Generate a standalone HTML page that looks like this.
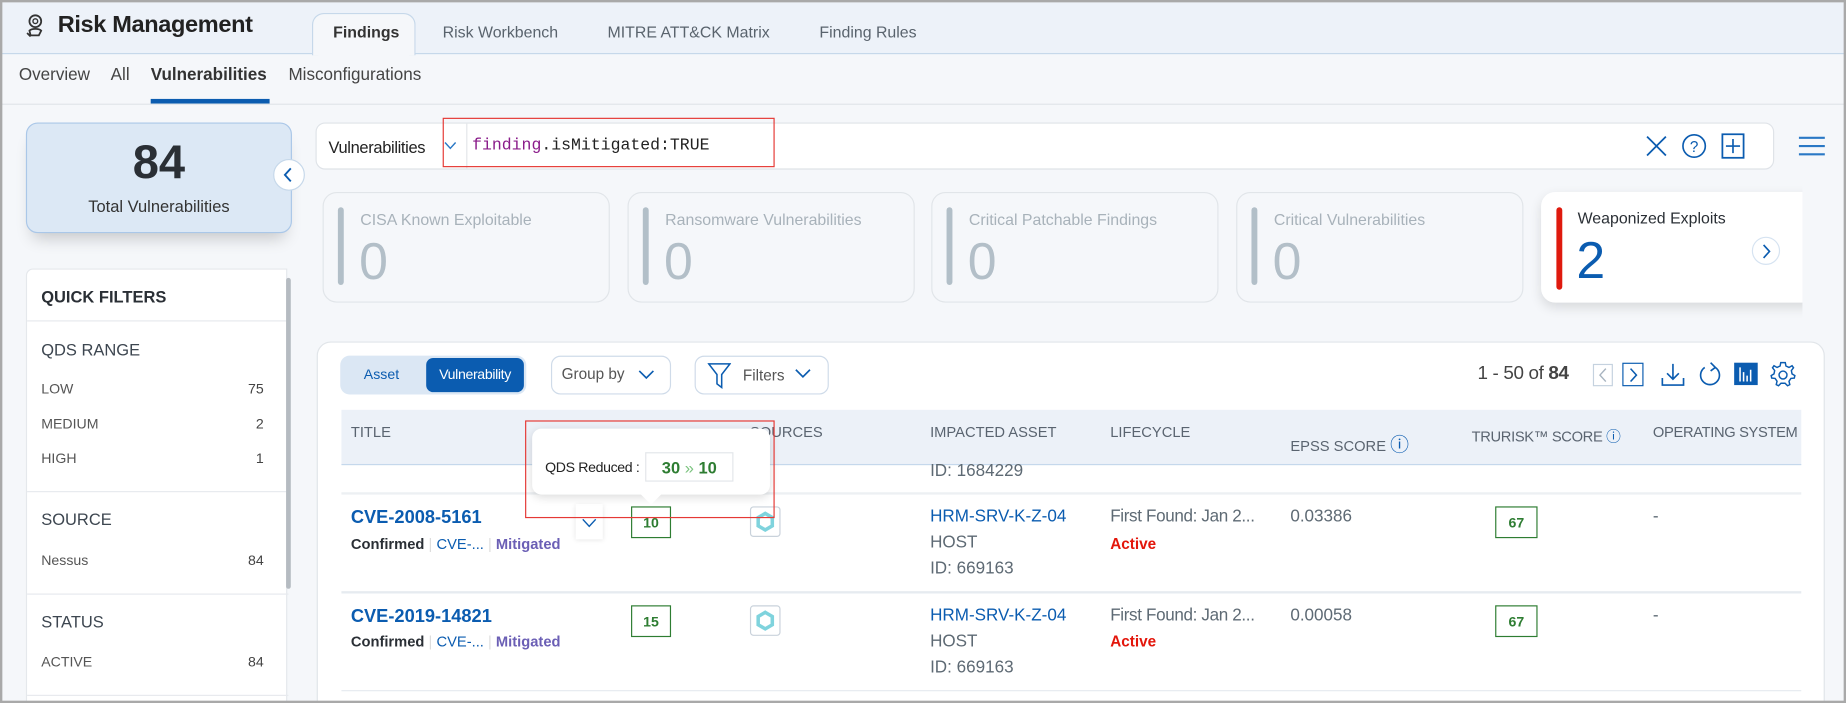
<!DOCTYPE html>
<html><head><meta charset="utf-8"><style>
*{box-sizing:border-box;margin:0;padding:0}
html,body{width:1846px;height:703px;overflow:hidden;background:#f5f7fa}
#w{position:absolute;left:0;top:0;width:1568px;height:597px;transform:scale(1.17730,1.17760);transform-origin:0 0;font-family:"Liberation Sans",sans-serif;color:#333;background:#f5f7fa;overflow:hidden}
.a{position:absolute;white-space:nowrap}
.hdr{left:0;top:0;width:1568px;height:46px;background:#edf2f9;border-bottom:1px solid #c6d8ea}
.tab{top:20px;font-size:13.5px;color:#59636d}
.sub{top:56px;font-size:14.5px;color:#444}
.card{background:#f5f7fa;border:1px solid #e1e5e9;border-radius:12px;top:163px;height:94px;width:244px}
.bar{left:12px;top:12px;width:5px;height:66px;border-radius:3px;background:#b2bfc8}
.ct{left:31px;top:15px;font-size:13.5px;color:#a8b2ba}
.cv{left:30px;top:34px;font-size:44px;color:#b3bfc8}
.qf{font-size:12px;color:#555}
.qv{font-size:12px;color:#444;right:19px}
.qh{font-size:14px;color:#3d4650}
.hl{height:1px;background:#e7eaee;left:0;width:222px}
.th{font-size:12.5px;color:#5a6470;top:360px}
.box{border:1px solid #2e7d32;color:#2e7d32;font-size:12px;font-weight:bold;text-align:center;line-height:26px;height:27px}
.cve{font-size:15.5px;font-weight:bold;color:#0b5cb0}
.g{color:#5e6a74;font-size:14.5px}
.blue{color:#0b5cb0;font-size:14.5px}
.red{color:#e3160b;font-weight:bold;font-size:13px}
.tag{font-size:12.5px}
</style></head><body><div id="w">
<div class="a hdr"></div>
<svg class="a" style="left:21px;top:11px" width="18" height="22" viewBox="0 0 18 22"><circle cx="9" cy="7" r="5" fill="none" stroke="#333" stroke-width="1.5"/><circle cx="9" cy="7" r="2" fill="none" stroke="#333" stroke-width="1.2"/><path d="M4 15 C6 13 12 13 14 15 L12 19 H5 Z M2 17 L5 20" fill="none" stroke="#333" stroke-width="1.5"/></svg>
<div class="a" style="left:49px;top:10px;font-size:20px;font-weight:bold;color:#222;letter-spacing:-0.3px">Risk Management</div>
<div class="a" style="left:265px;top:11px;width:88px;height:36px;background:#f5f7fa;border:1px solid #c6d8ea;border-bottom:none;border-radius:10px 10px 0 0"></div>
<div class="a tab" style="left:283px;font-weight:bold;color:#333">Findings</div>
<div class="a tab" style="left:376px">Risk Workbench</div>
<div class="a tab" style="left:516px">MITRE ATT&amp;CK Matrix</div>
<div class="a tab" style="left:696px">Finding Rules</div>
<div class="a sub" style="left:16px">Overview</div>
<div class="a sub" style="left:94px">All</div>
<div class="a sub" style="left:128px;font-weight:bold;color:#333">Vulnerabilities</div>
<div class="a sub" style="left:245px">Misconfigurations</div>
<div class="a" style="left:128px;top:84px;width:101px;height:4px;background:#0b5cb0"></div>
<div class="a" style="left:0;top:88px;width:1568px;height:1px;background:#e0e4e8"></div>

<div class="a" style="left:22px;top:104px;width:226px;height:94px;background:#dce8f5;border:1px solid #aac7e8;border-radius:10px;box-shadow:0 10px 14px -6px rgba(0,0,0,.2)"></div>
<div class="a" style="left:22px;top:116px;width:226px;text-align:center;font-size:40px;font-weight:bold;color:#2a2f35">84</div>
<div class="a" style="left:22px;top:167px;width:226px;text-align:center;font-size:14px;color:#333">Total Vulnerabilities</div>
<div class="a" style="left:232px;top:135px;width:27px;height:27px;border-radius:50%;background:#fff;border:1px solid #c6d8ea"></div>
<svg class="a" style="left:240px;top:142px" width="10" height="13"><path d="M7 1 L2 6.5 L7 12" fill="none" stroke="#0b5cb0" stroke-width="1.6"/></svg>

<div class="a" style="left:22px;top:228px;width:222px;height:380px;background:#fff;border:1px solid #e5e8ec;border-radius:6px 0 0 0">
<div class="a qh" style="left:12px;top:15px;font-weight:bold;color:#2a2f35">QUICK FILTERS</div>
<div class="a hl" style="top:43px"></div>
<div class="a qh" style="left:12px;top:60px">QDS RANGE</div>
<div class="a qf" style="left:12px;top:94px">LOW</div><div class="a qv" style="top:94px">75</div>
<div class="a qf" style="left:12px;top:124px">MEDIUM</div><div class="a qv" style="top:124px">2</div>
<div class="a qf" style="left:12px;top:153px">HIGH</div><div class="a qv" style="top:153px">1</div>
<div class="a hl" style="top:188px"></div>
<div class="a qh" style="left:12px;top:204px">SOURCE</div>
<div class="a qf" style="left:12px;top:240px">Nessus</div><div class="a qv" style="top:240px">84</div>
<div class="a hl" style="top:275px"></div>
<div class="a qh" style="left:12px;top:291px">STATUS</div>
<div class="a qf" style="left:12px;top:326px">ACTIVE</div><div class="a qv" style="top:326px">84</div>
<div class="a hl" style="top:361px"></div>
</div>
<div class="a" style="left:243px;top:236px;width:4px;height:264px;background:#b5bbc1;border-radius:2px"></div>

<div class="a" style="left:268px;top:104px;width:1239px;height:40px;background:#fff;border:1px solid #dfe3e8;border-radius:8px"></div>
<div class="a" style="left:279px;top:117px;font-size:14px;color:#222;letter-spacing:-0.3px">Vulnerabilities</div>
<svg class="a" style="left:377px;top:120px" width="11" height="8"><path d="M1 1 L5.5 6 L10 1" fill="none" stroke="#2a78c5" stroke-width="1.2"/></svg>
<div class="a" style="left:396px;top:105px;width:1px;height:38px;background:#e3e6ea"></div>
<div class="a" style="left:401px;top:116px;font-family:'Liberation Mono',monospace;font-size:14px;color:#222"><span style="color:#8a1c8a">finding</span>.isMitigated:TRUE</div>
<div class="a" style="left:376px;top:100px;width:282px;height:42px;border:1.5px solid #e53935"></div>
<svg class="a" style="left:1397px;top:114px" width="20" height="20"><path d="M2 2 L18 18 M18 2 L2 18" stroke="#0b5cb0" stroke-width="1.5"/></svg>
<svg class="a" style="left:1428px;top:113px" width="22" height="22"><circle cx="11" cy="11" r="9.5" fill="none" stroke="#0b5cb0" stroke-width="1.4"/><text x="11" y="16" font-size="13" text-anchor="middle" fill="#0b5cb0" font-family="Liberation Sans">?</text></svg>
<svg class="a" style="left:1462px;top:113px" width="20" height="22"><rect x="1" y="1" width="18" height="20" fill="none" stroke="#0b5cb0" stroke-width="1.5"/><path d="M10 5 V17 M4 11 H16" stroke="#0b5cb0" stroke-width="1.4"/></svg>
<svg class="a" style="left:1527px;top:115px" width="24" height="18"><path d="M1 2 H23 M1 9 H23 M1 16 H23" stroke="#2a78c5" stroke-width="1.8"/></svg>

<div class="a card" style="left:274px"><div class="a bar"></div><div class="a ct">CISA Known Exploitable</div><div class="a cv">0</div></div>
<div class="a card" style="left:533px"><div class="a bar"></div><div class="a ct">Ransomware Vulnerabilities</div><div class="a cv">0</div></div>
<div class="a card" style="left:791px"><div class="a bar"></div><div class="a ct">Critical Patchable Findings</div><div class="a cv">0</div></div>
<div class="a card" style="left:1050px"><div class="a bar"></div><div class="a ct">Critical Vulnerabilities</div><div class="a cv">0</div></div>
<div class="a card" style="left:1309px;width:240px;background:#fff;border:none;border-radius:12px 0 0 12px;box-shadow:0 4px 10px rgba(0,0,0,.12);clip-path:inset(-20px 18px -20px -20px)"><div class="a bar" style="left:13px;top:13px;height:70px;background:#df1a0e"></div><div class="a ct" style="left:31px;top:15px;color:#2a2f35">Weaponized Exploits</div><div class="a cv" style="color:#0b5cb0;top:34px">2</div>
<div class="a" style="left:179px;top:38px;width:24px;height:24px;border-radius:50%;border:1px solid #d6e3f1"></div><svg class="a" style="left:187px;top:44px" width="9" height="13"><path d="M2 1 L7 6.5 L2 12" fill="none" stroke="#0b5cb0" stroke-width="1.4"/></svg></div>

<div class="a" style="left:269px;top:290px;width:1281px;height:320px;background:#fff;border:1px solid #e1e5e9;border-radius:12px"></div>
<div class="a" style="left:289px;top:302px;width:158px;height:33px;background:#dbe7f4;border-radius:8px"></div>
<div class="a" style="left:309px;top:311px;font-size:12px;color:#0b5cb0">Asset</div>
<div class="a" style="left:362px;top:304px;width:83px;height:29px;background:#0b5cb0;border-radius:6px;color:#fff;font-size:12px;text-align:center;line-height:28px;letter-spacing:-0.3px">Vulnerability</div>
<div class="a" style="left:468px;top:302px;width:102px;height:33px;border:1px solid #cfdbe9;border-radius:8px"></div>
<div class="a" style="left:477px;top:310px;font-size:13px;color:#555">Group by</div>
<svg class="a" style="left:542px;top:314px" width="14" height="9"><path d="M1 1 L7 7 L13 1" fill="none" stroke="#0b5cb0" stroke-width="1.4"/></svg>
<div class="a" style="left:590px;top:302px;width:114px;height:33px;border:1px solid #cfdbe9;border-radius:8px"></div>
<svg class="a" style="left:601px;top:307px" width="20" height="24"><path d="M1 2 H19 L12 11 V22 L8 19 V11 Z" fill="none" stroke="#0b5cb0" stroke-width="1.3"/></svg>
<div class="a" style="left:631px;top:311px;font-size:13px;color:#555">Filters</div>
<svg class="a" style="left:675px;top:313px" width="14" height="9"><path d="M1 1 L7 7 L13 1" fill="none" stroke="#0b5cb0" stroke-width="1.4"/></svg>

<div class="a" style="left:1255px;top:309px;font-size:16px;color:#444;letter-spacing:-0.3px">1 - 50 of <b>84</b></div>
<div class="a" style="left:1353px;top:309px;width:17px;height:19px;border:1px solid #c5d2df"></div><svg class="a" style="left:1357px;top:312px" width="9" height="13"><path d="M7 1 L2 6.5 L7 12" fill="none" stroke="#a8b4c0" stroke-width="1.2"/></svg>
<div class="a" style="left:1378px;top:308px;width:18px;height:20px;border:1px solid #0b5cb0"></div><svg class="a" style="left:1383px;top:312px" width="9" height="13"><path d="M2 1 L7 6.5 L2 12" fill="none" stroke="#0b5cb0" stroke-width="1.3"/></svg>
<svg class="a" style="left:1410px;top:307px" width="22" height="22"><path d="M11 2 V15 M6 10 L11 15 L16 10 M2 14 V20 H20 V14" fill="none" stroke="#0b5cb0" stroke-width="1.4"/></svg>
<svg class="a" style="left:1442px;top:306px" width="22" height="24"><path d="M15 6 A8 8 0 1 1 6 6 M11 2 L15 6 L11 9" fill="none" stroke="#0b5cb0" stroke-width="1.4"/></svg>
<div class="a" style="left:1473px;top:308px;width:20px;height:19px;background:#0b5cb0"></div>
<svg class="a" style="left:1475px;top:310px" width="16" height="15"><path d="M3 2 V14 M6 6 V14 M9 9 V14 M12 4 V14" stroke="#fff" stroke-width="1.3"/></svg>
<svg class="a" style="left:1503px;top:306px" width="23" height="23" viewBox="0 0 24 24"><path d="M12 2 L14 2 L14.6 5 L17.3 6.3 L20 4.8 L21.3 6.6 L19.4 9.1 L20 12 L22.5 13.5 L22 15.7 L19 16 L17.3 18.5 L18 21.5 L16 22.5 L13.8 20.3 L10.2 20.3 L8 22.5 L6 21.5 L6.7 18.5 L5 16 L2 15.7 L1.5 13.5 L4 12 L4.6 9.1 L2.7 6.6 L4 4.8 L6.7 6.3 L9.4 5 L10 2 Z" fill="none" stroke="#0b5cb0" stroke-width="1.3"/><circle cx="12" cy="13" r="3.5" fill="none" stroke="#0b5cb0" stroke-width="1.3"/></svg>

<div class="a" style="left:290px;top:348px;width:1240px;height:47px;background:#ecf1f8;border-bottom:1px solid #c5d8ec"></div>
<div class="a th" style="left:298px">TITLE</div>
<div class="a th" style="left:536px">QDS ⓘ</div>
<div class="a th" style="left:637px">SOURCES</div>
<div class="a th" style="left:790px">IMPACTED ASSET</div>
<div class="a th" style="left:943px">LIFECYCLE</div>
<div class="a th" style="left:1096px;top:364px">EPSS SCORE <span style="color:#0b5cb0;font-size:16px">ⓘ</span></div>
<div class="a th" style="left:1250px;letter-spacing:-0.3px">TRURISK™ SCORE <span style="color:#0b5cb0">ⓘ</span></div>
<div class="a th" style="left:1404px;letter-spacing:-0.3px">OPERATING SYSTEM</div>
<div class="a g" style="left:790px;top:392px">ID: 1684229</div>
<div class="a" style="left:290px;top:418px;width:1240px;height:2px;background:#edf0f3"></div>

<div class="a cve" style="left:298px;top:431px">CVE-2008-5161</div>
<div class="a tag" style="left:298px;top:455px"><b style="color:#2a2f35">Confirmed</b> <span style="color:#ddd">|</span> <span style="color:#0b5cb0">CVE-...</span> <span style="color:#ddd">|</span> <span style="color:#6b5fb5;font-weight:bold">Mitigated</span></div>
<div class="a" style="left:489px;top:428px;width:23px;height:30px;background:#fff;box-shadow:0 1px 4px rgba(0,0,0,.1)"></div>
<svg class="a" style="left:494px;top:440px" width="13" height="9"><path d="M1 1 L6.5 7 L12 1" fill="none" stroke="#0b5cb0" stroke-width="1.2"/></svg>
<div class="a box" style="left:536px;top:430px;width:34px">10</div>
<div class="a" style="left:637px;top:430px;width:26px;height:26px;border:1px solid #c9d2db;border-radius:3px"></div>
<svg class="a" style="left:641px;top:434px" width="18" height="18"><polygon points="9,2 15,5.5 15,12.5 9,16 3,12.5 3,5.5" fill="none" stroke="#7fd3dd" stroke-width="3"/></svg>
<div class="a blue" style="left:790px;top:431px">HRM-SRV-K-Z-04</div>
<div class="a g" style="left:790px;top:453px">HOST</div>
<div class="a g" style="left:790px;top:475px">ID: 669163</div>
<div class="a g" style="left:943px;top:431px;letter-spacing:-0.3px">First Found: Jan 2...</div>
<div class="a red" style="left:943px;top:454px">Active</div>
<div class="a g" style="left:1096px;top:431px">0.03386</div>
<div class="a box" style="left:1270px;top:430px;width:36px">67</div>
<div class="a g" style="left:1404px;top:431px">-</div>
<div class="a" style="left:290px;top:502px;width:1240px;height:2px;background:#e6ebf0"></div>

<div class="a cve" style="left:298px;top:515px">CVE-2019-14821</div>
<div class="a tag" style="left:298px;top:538px"><b style="color:#2a2f35">Confirmed</b> <span style="color:#ddd">|</span> <span style="color:#0b5cb0">CVE-...</span> <span style="color:#ddd">|</span> <span style="color:#6b5fb5;font-weight:bold">Mitigated</span></div>
<div class="a box" style="left:536px;top:514px;width:34px">15</div>
<div class="a" style="left:637px;top:514px;width:26px;height:26px;border:1px solid #c9d2db;border-radius:3px"></div>
<svg class="a" style="left:641px;top:518px" width="18" height="18"><polygon points="9,2 15,5.5 15,12.5 9,16 3,12.5 3,5.5" fill="none" stroke="#7fd3dd" stroke-width="3"/></svg>
<div class="a blue" style="left:790px;top:515px">HRM-SRV-K-Z-04</div>
<div class="a g" style="left:790px;top:537px">HOST</div>
<div class="a g" style="left:790px;top:559px">ID: 669163</div>
<div class="a g" style="left:943px;top:515px;letter-spacing:-0.3px">First Found: Jan 2...</div>
<div class="a red" style="left:943px;top:537px">Active</div>
<div class="a g" style="left:1096px;top:515px">0.00058</div>
<div class="a box" style="left:1270px;top:514px;width:36px">67</div>
<div class="a g" style="left:1404px;top:515px">-</div>
<div class="a" style="left:290px;top:586px;width:1240px;height:1px;background:#e6ebf0"></div>

<div class="a" style="left:452px;top:364px;width:202px;height:56px;background:#fff;border-radius:8px;box-shadow:0 2px 8px rgba(0,0,0,.15)"></div>
<div class="a" style="left:547px;top:414px;width:12px;height:12px;background:#fff;transform:rotate(45deg)"></div>
<div class="a" style="left:463px;top:390px;font-size:12px;color:#222;letter-spacing:-0.3px">QDS Reduced :</div>
<div class="a" style="left:548px;top:384px;width:75px;height:25px;border:1px solid #e3e6ea;text-align:center;line-height:24px;font-size:14px;font-weight:bold;color:#2e7d32">30 <span style="color:#7cc47f;font-weight:normal">»</span> 10</div>
<div class="a" style="left:446px;top:357px;width:212px;height:83px;border:1.5px solid #e53935"></div>
<div class="a" style="left:0;top:0;width:1568px;height:597px;border:2px solid #a9a9a9"></div>
</div></body></html>
